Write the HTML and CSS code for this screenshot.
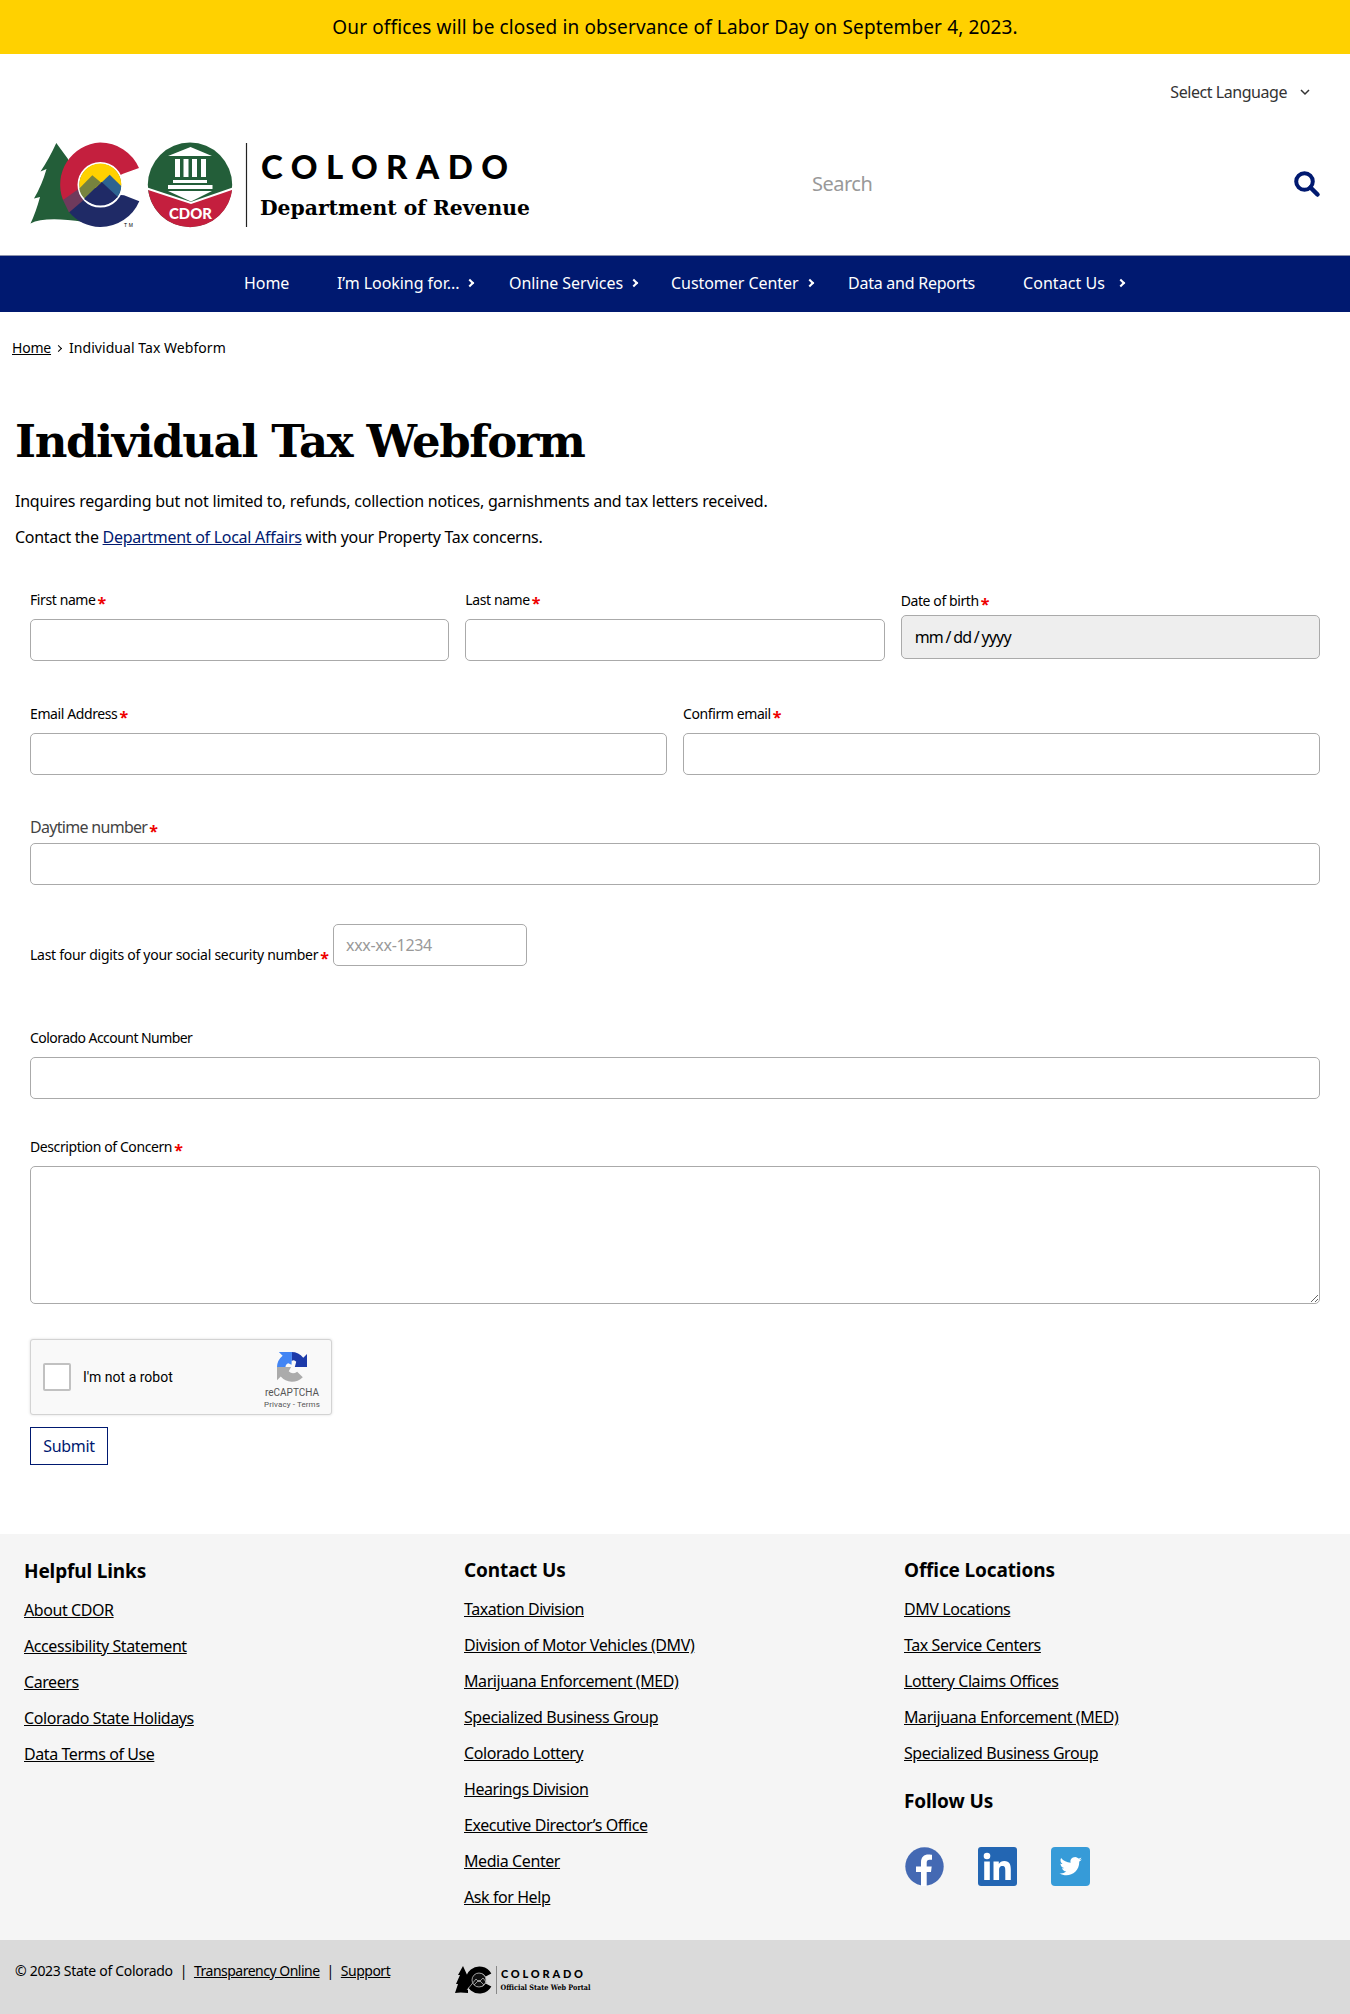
FILE: index.html
```html
<!DOCTYPE html>
<html lang="en">
<head>
<meta charset="utf-8">
<title>Individual Tax Webform</title>
<link rel="stylesheet" href="styles.css">
</head>
<body>
<div class="alert">Our offices will be closed in observance of Labor Day on September 4, 2023.</div>
<header class="header">
  <div class="language"><span>Select Language</span>
    <svg width="10" height="7" viewBox="0 0 10 7"><path d="M1 1l4 4 4-4" fill="none" stroke="#333" stroke-width="1.5"/></svg>
  </div>
  <div class="brand-row">
    <svg class="logo" width="512" height="90" viewBox="28 140 512 90">
      <path fill="#235e39" d="M56.300 143L68 159L84 222Q45 216 30.500 223.500Q36 212 40 197L34 198.500Q42 185 46.500 169L40.500 171.500Q49 159 56.300 143Z"/>
      <path fill="#c41f3e" d="M139 168A42.200 42.200 0 0 0 100 142.600A42.200 42.200 0 0 0 63 200L90 190L123 173.700Z"/>
      <path fill="#1f2a66" d="M139.300 201.300A42.200 42.200 0 0 1 100 227A42.200 42.200 0 0 1 69 212L84 192L124 195.300Z"/>
      <path fill="#6f3a5c" d="M63 200L80 188L86 198L69 212.500Z"/>
      <circle cx="100.300" cy="184.800" r="21.800" fill="#1f2a66" stroke="#fff" stroke-width="2"/>
      <path fill="#ffd100" d="M79.600 188A21 21 0 1 1 121 188Z"/>
      <path fill="#77833e" d="M79.300 188.500L92.300 175.300L101 182.500L84.500 198.500Q80 194 79.300 188.500Z"/>
      <path fill="#2d6390" d="M101 183L109.700 174.700L121.200 186Q121 192 117.500 197Z"/>
      <path fill="#1f2a66" d="M84 199L101.700 182L117.800 197Q102 212 84 199Z"/>
      <text x="124" y="227" class="logo-tm" textLength="9">TM</text>
      <circle cx="190" cy="184.800" r="42.200" fill="#235e39"/>
      <path fill="#c41f3e" d="M148 188.500L191 203L232.300 188.500A42.300 42.300 0 0 1 148 188.500Z"/>
      <path fill="none" stroke="#fff" stroke-width="2" d="M147 188.500L191 203L233 188.500"/>
      <path fill="#fff" d="M168 156L190.500 147L212 156ZM168 191H212L191 201.500ZM173 180h34v3h-34zM168 185h44.500v4h-44.500zM175 159h5v18h-5zM183.500 159h5v18h-5zM192 159h5v18h-5zM201 159h5v18h-5z"/>
      <text x="169" y="219" class="logo-cdor" textLength="43" lengthAdjust="spacingAndGlyphs">CDOR</text>
      <path stroke="#222" stroke-width="1.200" d="M246.500 143V227"/>
      <text x="261" y="179" class="logo-state" textLength="247">COLORADO</text>
      <text x="260" y="215" class="logo-dept" textLength="270" lengthAdjust="spacingAndGlyphs">Department of Revenue</text>
    </svg>
    <div class="search"><span>Search</span>
      <svg width="26" height="26" viewBox="0 0 26 26"><circle cx="10.500" cy="10.500" r="8.300" fill="none" stroke="#001970" stroke-width="4"/><path d="M16.500 16.500l7 7" stroke="#001970" stroke-width="4.500" stroke-linecap="round"/></svg>
    </div>
  </div>
</header>
<nav class="nav">
  <a class="n1">Home</a>
  <a class="n2">I’m Looking for...<i></i></a>
  <a class="n3">Online Services<i></i></a>
  <a class="n4">Customer Center<i></i></a>
  <a class="n5">Data and Reports</a>
  <a class="n6">Contact Us<i></i></a>
</nav>
<div class="crumbs"><a>Home</a><i></i><span>Individual Tax Webform</span></div>
<main>
  <h1>Individual Tax Webform</h1>
  <p>Inquires regarding but not limited to, refunds, collection notices, garnishments and tax letters received.</p>
  <p class="contact">Contact the <a>Department of Local Affairs</a> with your Property Tax concerns.</p>
  <form class="form">
    <div class="row three">
      <div><label class="req">First name</label><input class="field"></div>
      <div><label class="req">Last name</label><input class="field"></div>
      <div class="dob"><label class="req">Date of birth</label><div class="field date">mm<b>/</b>dd<b>/</b>yyyy</div></div>
    </div>
    <div class="row two">
      <div><label class="req">Email Address</label><input class="field"></div>
      <div><label class="req">Confirm email</label><input class="field"></div>
    </div>
    <div class="row phone"><label class="req">Daytime number</label><input class="field"></div>
    <div class="row ssn"><label class="req">Last four digits of your social security number</label><input class="field" placeholder="xxx-xx-1234"></div>
    <div class="row account"><label>Colorado Account Number</label><input class="field"></div>
    <div class="row concern"><label class="req">Description of Concern</label><textarea class="field"></textarea></div>
    <div class="captcha">
      <span class="box"></span><span class="robot">I'm not a robot</span>
      <div class="badge">
        <svg width="30" height="30" viewBox="0 0 64 64">
          <path fill="#1c3aa9" d="M64 32V4l-8 8A32 32 0 0 0 31 0V19Q37 15 41 21L38 32Z"/>
          <path fill="#4285f4" d="M32 0H4l8 8A32 32 0 0 0 0 32H18Q19 25 24 24L31 27Z"/>
          <path fill="#ababab" d="M0 32V60l8-8A32 32 0 0 0 55 54L43 42Q33 49 25 41L30 32Z"/>
        </svg>
        <span class="rc">reCAPTCHA</span><span class="pt">Privacy - Terms</span>
      </div>
    </div>
    <button type="button" class="submit">Submit</button>
  </form>
</main>
<footer>
  <div class="links">
    <section class="first"><h2>Helpful Links</h2><a>About CDOR</a><a>Accessibility Statement</a><a>Careers</a><a>Colorado State Holidays</a><a>Data Terms of Use</a></section>
    <section><h2>Contact Us</h2><a>Taxation Division</a><a>Division of Motor Vehicles (DMV)</a><a>Marijuana Enforcement (MED)</a><a>Specialized Business Group</a><a>Colorado Lottery</a><a>Hearings Division</a><a>Executive Director’s Office</a><a>Media Center</a><a>Ask for Help</a></section>
    <section><h2>Office Locations</h2><a>DMV Locations</a><a>Tax Service Centers</a><a>Lottery Claims Offices</a><a>Marijuana Enforcement (MED)</a><a>Specialized Business Group</a>
      <h2 class="follow">Follow Us</h2>
      <div class="social">
        <svg width="39" height="39" viewBox="0 0 39 39"><circle cx="19.500" cy="19.500" r="19.200" fill="#4469b3"/><path fill="#fff" d="M16 39V25h-5v-5.500h5v-4C16 10 19 7.500 23.500 7.500c2 0 3.500.3 3.500.3v5h-2.500c-2 0-2.800 1.200-2.800 2.700v4h5L26 25h-4.300v14z"/></svg>
        <svg width="39" height="39" viewBox="0 0 39 39"><rect width="39" height="39" rx="3" fill="#2366b3"/><circle cx="9" cy="9" r="3.300" fill="#fff"/><path fill="#fff" d="M6.200 14.500h5.600V33H6.200zM15.500 14.500h5.300V17c1-1.800 3-3 5.500-3 5.500 0 6.500 3.800 6.500 8.500V33h-5.500v-9.500c0-2.500-.2-4.600-3-4.600s-3.200 2.200-3.200 4.600V33h-5.600z"/></svg>
        <svg width="39" height="39" viewBox="0 0 39 39"><rect width="39" height="39" rx="4" fill="#369bd8"/><path fill="#fff" d="M31 12.300c-.8.400-1.700.6-2.600.7 1-.6 1.600-1.500 2-2.500-.9.500-1.900.9-2.900 1.100a4.600 4.600 0 0 0-7.900 4.200c-3.800-.2-7.200-2-9.500-4.800-1.200 2-.6 4.700 1.400 6.100-.8 0-1.500-.2-2.100-.6 0 2.200 1.500 4.200 3.700 4.600-.7.200-1.400.2-2.100.1.600 1.800 2.300 3.100 4.300 3.200a9.200 9.200 0 0 1-6.800 1.900c7.800 5 19.800.7 19.800-11.700 1-.6 2-1.400 2.700-2.300z"/></svg>
      </div>
    </section>
  </div>
  <div class="bottom">
    <div class="legal"><span>© 2023 State of Colorado</span><span>|</span><a>Transparency Online</a><span>|</span><a>Support</a></div>
    <svg class="portal" width="140" height="34" viewBox="453 1963 140 34">
      <path d="M463 1966L468 1977V1993Q460 1992 455 1993L458 1984H456L460 1975H458Z"/>
      <path fill="none" stroke="#000" stroke-width="6.500" d="M488.500 1975A10.300 10.300 0 1 0 488.500 1985"/>
      <circle cx="479" cy="1980" r="7" fill="#111" stroke="#bbb" stroke-width=".8"/>
      <path fill="none" stroke="#bbb" stroke-width=".8" d="M467 1990l9-11 3 3 4-4 4 5M474 1985l5-5 5 5"/>
      <path stroke="#888" d="M496.500 1966V1994"/>
      <text x="501" y="1978" class="portal-state" textLength="82">COLORADO</text>
      <text x="500.500" y="1990" class="portal-sub" textLength="90" lengthAdjust="spacingAndGlyphs">Official State Web Portal</text>
    </svg>
  </div>
</footer>
</body>
</html>
```
FILE: styles.css
```css
* { box-sizing: border-box; }
body { margin: 0; background: #fff; color: #000; font: 16px/20px "Noto Sans", "Open Sans", sans-serif; letter-spacing: -0.23px; }
svg { overflow: visible; }
i { display: inline-block; width: 6px; height: 6px; border: solid currentColor; border-width: 1.5px 1.5px 0 0; transform: rotate(45deg); }
.alert { height: 54px; background: #ffd100; text-align: center; line-height: 54px; font-size: 19px; letter-spacing: 0.13px; }
.header { height: 201px; padding: 28px 30px 0 28px; }
.language { display: flex; justify-content: flex-end; align-items: center; gap: 13px; height: 20px; padding-right: 10px; color: #333; letter-spacing: -0.45px; }
.brand-row { display: flex; justify-content: space-between; margin-top: 38px; }
.logo-tm { font: 5px "Liberation Sans", sans-serif; letter-spacing: 0; }
.logo-cdor { font: 900 15px Lato, sans-serif; fill: #fff; letter-spacing: 0; }
.logo-state { font: 900 33px Lato, sans-serif; letter-spacing: 0; }
.logo-dept { font: bold 21px "DejaVu Serif", serif; letter-spacing: 0; }
.search { display: flex; justify-content: space-between; align-items: center; width: 508px; height: 88px; font-size: 20px; color: #999; letter-spacing: -0.5px; }
.nav { display: flex; height: 57px; background: #001970; border-top: 1px solid #8d93ad; color: #fff; line-height: 53px; padding-left: 244px; white-space: nowrap; letter-spacing: -0.05px; }
.nav a { display: flex; align-items: center; height: 54px; }
.nav i { margin-left: 8px; border-width: 2px 2px 0 0; }
.nav .n6 i { margin-left: 13px; }
.n1 { width: 93px; } .n2 { width: 172px; } .n3 { width: 162px; } .n4 { width: 177px; } .n5 { width: 175px; letter-spacing: -0.25px; }
.n6 { letter-spacing: 0.05px; }
.crumbs { display: flex; align-items: center; height: 72px; padding-left: 12px; font-size: 14px; letter-spacing: 0.05px; }
.crumbs a { width: 39px; text-decoration: underline; letter-spacing: -0.2px; }
.crumbs i { width: 5px; height: 5px; margin: 0 8px 0 5px; }
main { height: 1150px; padding: 28px 0 0 15px; }
h1 { margin: 0; font: bold 45px/60px "DejaVu Serif", serif; letter-spacing: -1.4px; white-space: nowrap; }
main p { margin: 0 0 16px; }
h1 + p { padding-top: 19px; margin-top: 0; }
main .contact { letter-spacing: -0.28px; }
main p a { color: #001970; text-decoration: underline; }
.form { margin: 43px 30px 0 15px; }
.row { display: grid; column-gap: 16px; }
.three { grid-template-columns: repeat(3, 1fr); height: 114px; }
.two { grid-template-columns: repeat(2, 1fr); height: 113px; }
label { display: block; height: 20px; font-size: 14px; white-space: nowrap; letter-spacing: -0.4px; }
.req::after { content: "*"; color: #e00; font: bold 16px/10px "Noto Sans", sans-serif; margin-left: 2px; vertical-align: -4px; }
.field { display: block; width: 100%; height: 42px; margin: 9px 0 0; border: 1px solid #aaa; border-radius: 5px; background: #fff; padding: 0 12px; font: 16px "Noto Sans", sans-serif; }
.dob { padding-top: 1px; }
.date { height: 44px; margin-top: 4px; padding: 0 13px; background: #eee; line-height: 42px; letter-spacing: -0.8px; }
.date b { font-weight: normal; margin: 0 2.5px; }
.phone { display: block; height: 107px; }
.phone label { font-size: 16px; color: #444; letter-spacing: -0.7px; }
.phone .field { margin-top: 6px; }
.ssn { display: flex; align-items: flex-end; height: 42px; }
.ssn label { width: 287px; margin-bottom: 1px; letter-spacing: -0.27px; }
.ssn .field { width: 194px; margin: 0; }
.ssn .field::placeholder { color: #999; letter-spacing: -0.3px; }
.account { display: block; margin-top: 62px; height: 109px; }
.account label { letter-spacing: -0.55px; }
.concern { display: block; }
.concern .field { height: 138px; }
.captcha { display: flex; align-items: center; width: 302px; height: 76px; margin-top: 35px; padding: 0 12px; background: #f9f9f9; border: 1px solid #d3d3d3; border-radius: 3px; box-shadow: 0 0 3px #ddd; font-family: Roboto, sans-serif; letter-spacing: 0; }
.box { width: 28px; height: 28px; border: 2px solid #c1c1c1; border-radius: 2px; background: #fff; }
.robot { margin-left: 12px; font-size: 14px; }
.badge { display: flex; flex-direction: column; align-items: center; width: 56px; margin-left: auto; margin-right: -1px; padding-top: 7px; color: #555; white-space: nowrap; }
.rc { font-size: 10px; line-height: 12px; margin-top: 5px; }
.pt { font-size: 8px; line-height: 11px; letter-spacing: 0.1px; }
.submit { display: block; width: 78px; height: 38px; margin-top: 12px; padding: 0; border: 1px solid #001970; background: #fff; color: #001970; font: 16px "Noto Sans", sans-serif; letter-spacing: -0.3px; }
.links { display: grid; grid-template-columns: repeat(3, 440px); height: 406px; padding: 21px 0 0 24px; background: #f5f5f5; }
.links section.first { padding-top: 1px; }
.links a { display: block; height: 20px; margin-bottom: 16px; text-decoration: underline; letter-spacing: -0.42px; }
h2 { margin: 0 0 14px; font: bold 19px/30px "Noto Sans", sans-serif; letter-spacing: -0.13px; }
.follow { margin-top: 23px; }
.social { display: flex; gap: 34px; padding-top: 17px; margin-left: 1px; }
.bottom { display: flex; height: 74px; padding: 21px 0 0 15px; background: #dadada; }
.legal { display: flex; width: 438px; gap: 7px; font-size: 14px; white-space: nowrap; letter-spacing: -0.5px; }
.legal span:first-child { letter-spacing: -0.3px; }
.legal a { text-decoration: underline; }
.portal { margin-top: 2px; }
.portal-state { font: 900 11px Lato, sans-serif; letter-spacing: 0; }
.portal-sub { font: bold 7.500px "DejaVu Serif", serif; letter-spacing: 0; }
```
